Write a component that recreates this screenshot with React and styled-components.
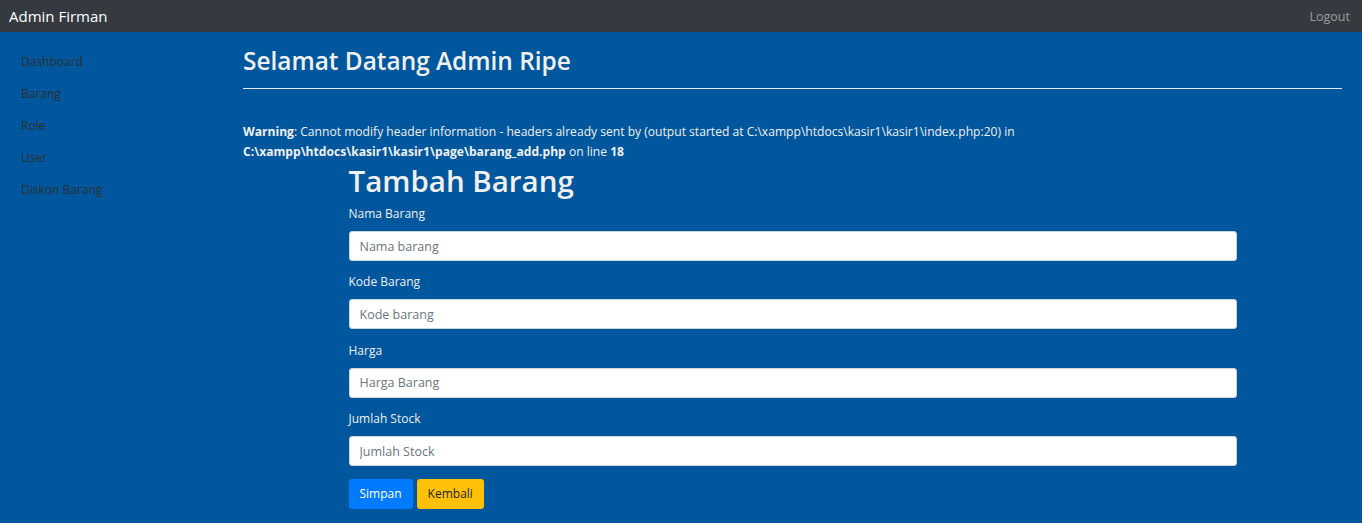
import React from 'react';
import styled, { createGlobalStyle } from 'styled-components';

const GlobalStyle = createGlobalStyle`
  * { box-sizing: border-box; }
  html, body {
    margin: 0;
    padding: 0;
    background: #00579d;
    font-family: "Open Sans", "Liberation Sans", sans-serif;
  }
`;

const menu = ['Dashboard', 'Barang', 'Role', 'User', 'Diskon Barang'];

const fields = [
  { label: 'Nama Barang', placeholder: 'Nama barang' },
  { label: 'Kode Barang', placeholder: 'Kode barang' },
  { label: 'Harga', placeholder: 'Harga Barang' },
  { label: 'Jumlah Stock', placeholder: 'Jumlah Stock' },
];

const App = () => {
  return (
    <>
      <GlobalStyle />
      <Navbar>
        <Brand href="#">Admin Firman</Brand>
        <NavLink href="#">Logout</NavLink>
      </Navbar>

      <Layout>
        <Sidebar>
          {menu.map((item) => (
            <SideLink key={item} href="#">{item}</SideLink>
          ))}
        </Sidebar>

        <Main>
          <PageTitle>Selamat Datang Admin Ripe</PageTitle>
          <Divider />

          <Warning>
            <b>Warning</b>: Cannot modify header information - headers already sent by (output started at C:\xampp\htdocs\kasir1\kasir1\index.php:20) in
            <br />
            <b>C:\xampp\htdocs\kasir1\kasir1\page\barang_add.php</b> on line <b>18</b>
          </Warning>

          <FormBox>
            <FormTitle>Tambah Barang</FormTitle>
            {fields.map((f) => (
              <Group key={f.label}>
                <Label>{f.label}</Label>
                <Input type="text" placeholder={f.placeholder} />
              </Group>
            ))}
            <Actions>
              <Button type="submit" $variant="primary">Simpan</Button>
              <Button type="button" $variant="warning">Kembali</Button>
            </Actions>
          </FormBox>
        </Main>
      </Layout>
    </>
  );
};

// styled components
const Navbar = styled.nav`
  height: 32px;
  background-color: #343a40;
  display: flex;
  align-items: center;
  justify-content: space-between;
  padding: 0 12px 0 9px;
`;

const Brand = styled.a`
  color: #fff;
  font-size: 15px;
  text-decoration: none;
`;

const NavLink = styled.a`
  color: rgba(255, 255, 255, 0.5);
  font-size: 12.5px;
  text-decoration: none;
`;

const Layout = styled.div`
  display: grid;
  grid-template-columns: 227px 1fr;
  min-height: 491px;
`;

const Sidebar = styled.aside`
  display: flex;
  flex-direction: column;
  padding: 14px 0 0 21px;
`;

const SideLink = styled.a`
  color: #2b2f33;
  font-size: 12px;
  line-height: 18px;
  padding: 7px 0;
  text-decoration: none;
`;

const Main = styled.main`
  padding: 0 20px 0 16px;
  color: #f0f0f0;
`;

const PageTitle = styled.h3`
  margin: 0;
  padding-top: 12px;
  font-size: 24.4px;
  font-weight: 600;
  line-height: 34px;
`;

const Divider = styled.hr`
  margin: 10px 0 0;
  border: 0;
  border-top: 1px solid #e8e8e8;
`;

const Warning = styled.div`
  margin-top: 33px;
  font-size: 12.1px;
  line-height: 20px;

  b {
    font-weight: 700;
  }
`;

const FormBox = styled.form`
  max-width: 888px;
  margin: 0 auto;
`;

const FormTitle = styled.h1`
  margin: 0 0 4px;
  font-size: 29.5px;
  font-weight: 600;
  line-height: 38px;
`;

const Group = styled.div`
  margin-bottom: 11.4px;
`;

const Label = styled.label`
  display: block;
  font-size: 12px;
  line-height: 20px;
  margin-bottom: 7px;
`;

const Input = styled.input`
  display: block;
  width: 100%;
  height: 30px;
  padding: 0 10px;
  font-family: inherit;
  font-size: 12.5px;
  color: #495057;
  background: #fff;
  border: 1px solid #ced4da;
  border-radius: 3px;
  outline: none;

  &::placeholder {
    color: #6c757d;
  }
`;

const Button = styled.button`
  height: 30px;
  padding: 0 10px;
  margin-right: 4px;
  font-family: inherit;
  font-size: 12px;
  border: 1px solid transparent;
  border-radius: 3px;
  cursor: pointer;
  color: ${({ $variant }) => ($variant === 'warning' ? '#212529' : '#fff')};
  background-color: ${({ $variant }) => ($variant === 'warning' ? '#ffc107' : '#007bff')};
`;

const Actions = styled.div`
  display: flex;
  padding-top: 1px;
`;

export default App;
